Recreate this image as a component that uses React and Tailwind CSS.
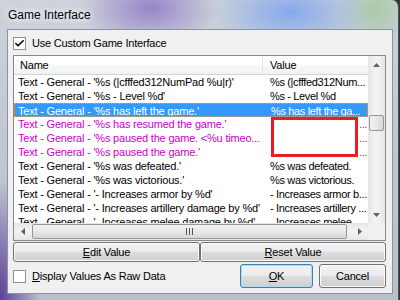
import { Check } from "lucide-react"

const BLACK = "text-black"
const PINK = "text-[#cc00cc]"

const rows = [
    { name: "Text - General - '%s (|cfffed312NumPad %u|r)'", value: "%s (|cfffed312Num...", color: BLACK },
    { name: "Text - General - '%s - Level %d'", value: "%s - Level %d", color: BLACK },
    { name: "Text - General - '%s has left the game.'", value: "%s has left the ga...", color: BLACK, selected: true },
    { name: "Text - General - '%s has resumed the game.'", value: "...", color: PINK, dots: true },
    { name: "Text - General - '%s paused the game. <%u timeo...", value: "...", color: PINK, dots: true },
    { name: "Text - General - '%s paused the game.'", value: "...", color: PINK, dots: true },
    { name: "Text - General - '%s was defeated.'", value: "%s was defeated.", color: BLACK },
    { name: "Text - General - '%s was victorious.'", value: "%s was victorious.", color: BLACK },
    { name: "Text - General - '- Increases armor by %d'", value: "- Increases armor b...", color: BLACK },
    { name: "Text - General - '- Increases artillery damage by %d'", value: "- Increases artillery ...", color: BLACK },
    { name: "Text - General - '- Increases melee damage by %d'", value: "- Increases melee ...", color: BLACK },
]

// small win7 style checkbox
const CheckBox = ({ checked }) => (
    <div className="w-[13px] h-[13px] border border-[#8e8f8f] bg-white flex items-center justify-center shrink-0">
        {checked && <Check size={11} strokeWidth={3.5} className="text-black" />}
    </div>
)

const Arrow = ({ dir }) => {
    const pts = {
        up: "0,4 3.5,0 7,4",
        down: "0,0 3.5,4 7,0",
        left: "4,0 0,3.5 4,7",
        right: "0,0 4,3.5 0,7",
    }[dir]
    const vertical = dir === "up" || dir === "down"
    return (
        <svg width={vertical ? 7 : 4} height={vertical ? 4 : 7}>
            <polygon points={pts} fill="#606060" />
        </svg>
    )
}

const WinButton = ({ children, className = "", isDefault = false }) => (
    <button
        className={
            "flex items-center justify-center rounded-[3px] border text-[11px] tracking-[-0.2px] text-black " +
            "bg-[linear-gradient(180deg,#f2f2f2_0%,#ebebeb_50%,#dddddd_51%,#cfcfcf_100%)] " +
            (isDefault ? "border-[#3c7fb1] shadow-[inset_0_0_0_1px_#a8dcf6] " : "border-[#707070] shadow-[inset_0_0_0_1px_#fcfcfc] ") +
            className
        }>
        {children}
    </button>
)

const App = () => {
    return (
        <div className="w-[400px] h-[300px] bg-[#2f3a33] overflow-hidden font-['Liberation_Sans',Arial,sans-serif]">
            <div className="w-[399px] h-[300px] rounded-tr-[7px] border-r border-[#4a4f58] flex flex-col bg-[radial-gradient(ellipse_70px_40px_at_150px_8px,#9784c8,transparent),radial-gradient(ellipse_80px_40px_at_290px_12px,#86a9ec,transparent),radial-gradient(ellipse_40px_40px_at_375px_10px,#a9c9a8,transparent),radial-gradient(ellipse_40px_120px_at_0px_300px,#5b3f97,transparent),linear-gradient(180deg,#cdd2db,#c3c9d4_40%,#b9c0cc)]">
                {/* Title bar */}
                <div className="h-[29px] shrink-0 flex items-center pl-[8px] text-[12px] text-black [text-shadow:0_0_6px_#ffffff,0_0_10px_#ffffff]">
                    Game Interface
                </div>
                {/* Client area */}
                <div className="ml-[7px] mr-[5px] h-[265px] border border-[#8a93a2] bg-[#f0f0f0] flex flex-col pl-[5px] pr-[6px] relative text-[11px] tracking-[-0.2px]">
                    <div className="flex items-center h-[13px] mt-[7px] gap-[6px]">
                        <CheckBox checked />
                        <span>Use Custom Game Interface</span>
                    </div>

                    {/* List view */}
                    <div className="mt-[5px] h-[186px] border border-[#828790] bg-white flex flex-col">
                        <div className="flex h-[167px]">
                            <div className="w-[355px] flex flex-col overflow-hidden relative">
                                <div className="flex h-[19px] shrink-0 border-b border-[#d5d5d5] bg-[linear-gradient(180deg,#ffffff,#ffffff_50%,#f7f8fa_51%,#f1f2f4)]">
                                    <div className="w-[249px] border-r border-[#e5e5e5] pl-[6px] flex items-center">Name</div>
                                    <div className="flex-1 pl-[7px] flex items-center">Value</div>
                                </div>
                                {rows.map((r, i) => (
                                    <div
                                        key={i}
                                        className={
                                            "flex h-[14px] shrink-0 leading-[14px] whitespace-nowrap " +
                                            (r.selected ? "bg-[#3399ff] text-white border border-dotted border-[#ff9a33] leading-[12px]" : r.color)
                                        }>
                                        <div className={"w-[249px] shrink-0 overflow-hidden " + (r.selected ? "pl-[3px]" : "pl-[4px]")}>{r.name}</div>
                                        <div className={"flex-1 overflow-hidden pl-[7px] tracking-[-0.35px] " + (r.dots ? "text-right pr-[1px]" : "")}>{r.value}</div>
                                    </div>
                                ))}
                                {/* red annotation box */}
                                <div className="absolute left-[257px] top-[61px] w-[87px] h-[40px] border-[3px] border-[#ec1c24]" />
                            </div>
                            {/* vertical scrollbar */}
                            <div className="w-[17px] flex flex-col bg-[linear-gradient(90deg,#e6e6e6,#f2f2f2_40%,#f2f2f2_60%,#e6e6e6)]">
                                <div className="h-[17px] flex items-center justify-center"><Arrow dir="up" /></div>
                                <div className="flex-1 relative">
                                    <div className="absolute left-[1px] right-[1px] top-[42px] h-[16px] rounded-[2px] border border-[#979797] bg-[linear-gradient(90deg,#f3f3f3,#e8e8e8_50%,#d6d6d6)]" />
                                </div>
                                <div className="h-[17px] flex items-center justify-center"><Arrow dir="down" /></div>
                            </div>
                        </div>
                        {/* horizontal scrollbar */}
                        <div className="flex h-[17px]">
                            <div className="w-[355px] flex bg-[linear-gradient(180deg,#e6e6e6,#f2f2f2_40%,#f2f2f2_60%,#e6e6e6)]">
                                <div className="w-[17px] flex items-center justify-center"><Arrow dir="left" /></div>
                                <div className="flex-1 py-[1px]">
                                    <div className="ml-[1px] w-[315px] h-full rounded-[2px] border border-[#979797] bg-[linear-gradient(180deg,#f3f3f3,#e8e8e8_50%,#d6d6d6)] flex items-center justify-center">
                                        <div className="w-[1px] h-[7px] bg-[#555]" />
                                        <div className="w-[1px] h-[7px] bg-[#555] ml-[2px]" />
                                        <div className="w-[1px] h-[7px] bg-[#555] ml-[2px]" />
                                    </div>
                                </div>
                                <div className="w-[17px] flex items-center justify-center"><Arrow dir="right" /></div>
                            </div>
                            <div className="w-[17px] bg-[#f0f0f0]" />
                        </div>
                    </div>

                    {/* Edit / Reset */}
                    <div className="flex h-[20px] mt-[1px]">
                        <WinButton className="w-[187px] h-full">
                            <span><span className="underline">E</span>dit Value</span>
                        </WinButton>
                        <WinButton className="flex-1 h-full">
                            <span><span className="underline">R</span>eset Value</span>
                        </WinButton>
                    </div>

                    {/* Bottom row */}
                    <div className="flex items-center h-[24px] mt-[2px]">
                        <CheckBox />
                        <span className="ml-[6px]"><span className="underline">D</span>isplay Values As Raw Data</span>
                        <div className="ml-auto flex gap-[6px] h-[24px]">
                            <WinButton className="w-[73px] h-full" isDefault>
                                <span><span className="underline">O</span>K</span>
                            </WinButton>
                            <WinButton className="w-[67px] h-full">Cancel</WinButton>
                        </div>
                    </div>
                </div>
            </div>
        </div>
    )
}

export default App
